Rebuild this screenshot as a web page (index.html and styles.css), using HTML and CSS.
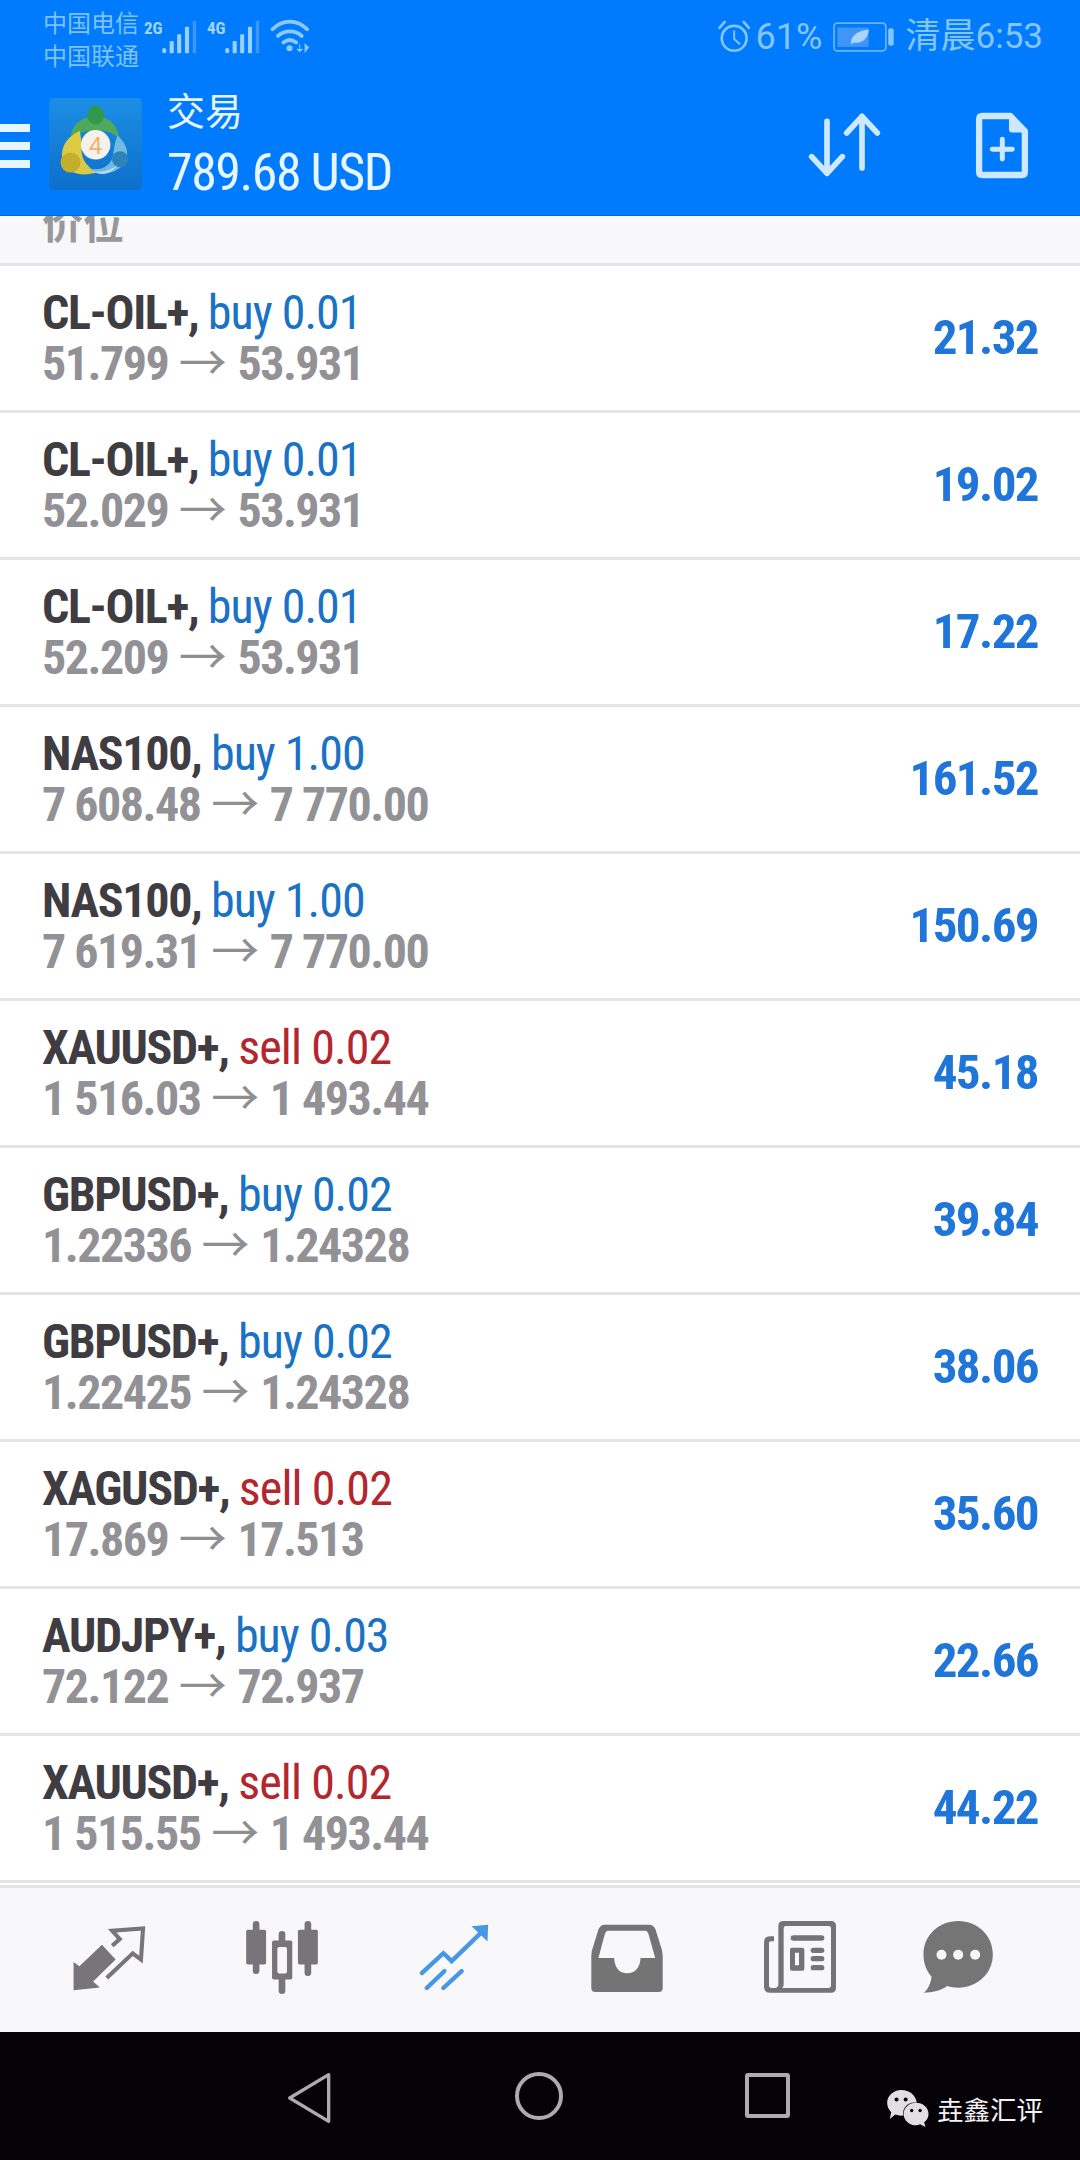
FILE: index.html
```html
<!DOCTYPE html>
<html lang="zh">
<head>
<meta charset="utf-8">
<title>交易</title>
<link rel="stylesheet" href="styles.css">
</head>
<body>
<div class="app">
  <header class="header">
    <div class="status">
      <div class="carriers"><span>中国电信</span><span>中国联通</span></div>
      <div class="signal sig-first">
        <span class="net">2G</span>
        <svg class="bars" viewBox="470 58 102 100"><g class="bar-g"><rect x="470" y="140" width="12" height="16" rx="6"/><rect x="492" y="120" width="12" height="36" rx="3"/><rect x="514" y="100" width="12" height="56" rx="3"/><rect x="537" y="78" width="12" height="78" rx="3"/></g><rect class="bar-dim" x="560" y="60" width="10" height="96" rx="3"/></svg>
      </div>
      <div class="signal sig-second">
        <span class="net">4G</span>
        <svg class="bars" viewBox="470 58 102 100"><g class="bar-g"><rect x="470" y="140" width="12" height="16" rx="6"/><rect x="492" y="120" width="12" height="36" rx="3"/><rect x="514" y="100" width="12" height="56" rx="3"/><rect x="537" y="78" width="12" height="78" rx="3"/></g><rect class="bar-dim" x="560" y="60" width="10" height="96" rx="3"/></svg>
      </div>
      <svg class="wifi" viewBox="790 58 115 100">
        <g fill="none" stroke="#8ccafc" stroke-width="11" stroke-linecap="round">
          <path d="M796 88C826 58 868 58 898 88"/>
          <path d="M812 108C832 90 862 90 882 108"/>
          <path d="M828 127C840 118 854 118 866 127"/>
        </g>
        <circle cx="846" cy="144" r="9" fill="#8ccafc"/>
        <path d="M876 132v22M868 146l8 8 8-8M892 154v-22l10 10z" fill="#8ccafc" stroke="#8ccafc" stroke-width="3"/>
      </svg>
      <div class="status-right">
        <svg class="alarm" viewBox="512 58 100 104">
          <circle cx="561" cy="114" r="38" fill="none" stroke="#84c5fb" stroke-width="8"/>
          <path d="M561 90v26l18 16" fill="none" stroke="#84c5fb" stroke-width="6"/>
          <path d="M516 82l16-18M606 82l-16-18" stroke="#84c5fb" stroke-width="8" stroke-linecap="round"/>
        </svg>
        <span class="pct">61%</span>
        <svg class="battery" viewBox="846 66 180 88">
          <rect x="849" y="69" width="153" height="82" rx="10" fill="none" stroke="#6bb5fb" stroke-width="5"/>
          <rect x="859" y="82" width="92" height="57" fill="#3f96f7"/>
          <path d="M900 132C895 110 915 92 952 88C950 115 930 132 908 126z" fill="#a9d4fb"/>
          <rect x="1009" y="84" width="16" height="52" rx="6" fill="#84c5fb"/>
        </svg>
        <span class="clock">清晨6:53</span>
      </div>
    </div>
    <div class="appbar">
      <div class="burger"><i></i><i></i><i></i></div>
      <svg class="logo" viewBox="58 25 277 275">
        <defs><linearGradient id="lg" x1="0" y1="0" x2="0" y2="1"><stop offset="0" stop-color="#1c8ee6"/><stop offset="1" stop-color="#0d6fca"/></linearGradient></defs>
        <rect x="58" y="25" width="277" height="275" rx="14" fill="url(#lg)"/>
        <path d="M122 140C128 100 158 80 197 80C238 80 262 104 268 146C244 124 222 120 197 124C170 122 146 128 122 140z" fill="#4fa85c"/>
        <ellipse cx="197" cy="76" rx="25" ry="28" fill="#2f9a4c"/>
        <path d="M150 124C110 140 90 176 98 214C108 248 152 262 200 248C166 228 150 200 156 168z" fill="#dcca45"/>
        <circle cx="122" cy="218" r="30" fill="#c5ae2c"/>
        <path d="M262 136C296 166 302 206 272 232C244 256 206 254 172 234C214 246 246 228 250 190C252 170 256 152 262 136z" fill="#6fbadf"/>
        <circle cx="270" cy="208" r="24" fill="#2d83b9"/>
        <path d="M190 244C220 250 248 236 262 226C240 256 210 258 190 244z" fill="#b8dceb"/>
        <circle cx="197" cy="165" r="44" fill="#f6f1ea"/>
        <text class="logo-num" x="197" y="191">4</text>
      </svg>
      <div class="account">
        <div class="acc-title">交易</div>
        <div class="acc-balance">789.68 USD</div>
      </div>
      <svg class="act act-sort" viewBox="780 335 220 195">
        <g fill="none" stroke="#cde8ff" stroke-width="17" stroke-linecap="round" stroke-linejoin="round">
          <path d="M836 360V515M790 466L836 516L882 466"/>
          <path d="M941 345V500M895 395L941 345L987 395"/>
        </g>
      </svg>
      <svg class="act act-doc" viewBox="1260 330 162 202">
        <path d="M1282 342H1366L1410 388V510Q1410 520 1400 520H1282Q1272 520 1272 510V352Q1272 342 1282 342z" fill="none" stroke="#cde8ff" stroke-width="19" stroke-linejoin="round"/>
        <path d="M1362 338L1416 392H1372Q1362 392 1362 382z" fill="#cde8ff"/>
        <path d="M1342 412V472M1312 442H1372" stroke="#cde8ff" stroke-width="15" stroke-linecap="round"/>
      </svg>
    </div>
  </header>

  <div class="section"><span class="section-label">价位</span></div>

  <main class="list">
    <div class="row"><div class="info"><div class="line1"><b>CL-OIL+,</b> <span class="buy">buy 0.01</span></div><div class="line2">51.799 <span class="arr">→</span> 53.931</div></div><div class="val">21.32</div></div>
    <div class="row"><div class="info"><div class="line1"><b>CL-OIL+,</b> <span class="buy">buy 0.01</span></div><div class="line2">52.029 <span class="arr">→</span> 53.931</div></div><div class="val">19.02</div></div>
    <div class="row"><div class="info"><div class="line1"><b>CL-OIL+,</b> <span class="buy">buy 0.01</span></div><div class="line2">52.209 <span class="arr">→</span> 53.931</div></div><div class="val">17.22</div></div>
    <div class="row"><div class="info"><div class="line1"><b>NAS100,</b> <span class="buy">buy 1.00</span></div><div class="line2">7 608.48 <span class="arr">→</span> 7 770.00</div></div><div class="val">161.52</div></div>
    <div class="row"><div class="info"><div class="line1"><b>NAS100,</b> <span class="buy">buy 1.00</span></div><div class="line2">7 619.31 <span class="arr">→</span> 7 770.00</div></div><div class="val">150.69</div></div>
    <div class="row"><div class="info"><div class="line1"><b>XAUUSD+,</b> <span class="sell">sell 0.02</span></div><div class="line2">1 516.03 <span class="arr">→</span> 1 493.44</div></div><div class="val">45.18</div></div>
    <div class="row"><div class="info"><div class="line1"><b>GBPUSD+,</b> <span class="buy">buy 0.02</span></div><div class="line2">1.22336 <span class="arr">→</span> 1.24328</div></div><div class="val">39.84</div></div>
    <div class="row"><div class="info"><div class="line1"><b>GBPUSD+,</b> <span class="buy">buy 0.02</span></div><div class="line2">1.22425 <span class="arr">→</span> 1.24328</div></div><div class="val">38.06</div></div>
    <div class="row"><div class="info"><div class="line1"><b>XAGUSD+,</b> <span class="sell">sell 0.02</span></div><div class="line2">17.869 <span class="arr">→</span> 17.513</div></div><div class="val">35.60</div></div>
    <div class="row"><div class="info"><div class="line1"><b>AUDJPY+,</b> <span class="buy">buy 0.03</span></div><div class="line2">72.122 <span class="arr">→</span> 72.937</div></div><div class="val">22.66</div></div>
    <div class="row"><div class="info"><div class="line1"><b>XAUUSD+,</b> <span class="sell">sell 0.02</span></div><div class="line2">1 515.55 <span class="arr">→</span> 1 493.44</div></div><div class="val">44.22</div></div>
  </main>

  <nav class="tabs">
    <svg class="tab t1" viewBox="215 200 210 190">
      <path d="M215 388V305L232 318L298 255L338 298L272 362L292 380z" fill="#77757a"/>
      <path d="M328 258L350 238L328 214L418 207L412 298L388 280L312 352" fill="none" stroke="#77757a" stroke-width="12"/>
    </svg>
    <svg class="tab t2" viewBox="708 184 218 220">
      <g fill="#77757a">
        <rect x="729" y="184" width="20" height="160" rx="10"/><rect x="709" y="210" width="60" height="105" rx="5"/>
        <rect x="807" y="214" width="20" height="190" rx="10"/><rect x="787" y="243" width="61" height="117" rx="5"/>
        <rect x="885" y="184" width="20" height="166" rx="10"/><rect x="865" y="210" width="60" height="105" rx="5"/>
      </g>
      <rect x="803" y="262" width="29" height="80" rx="6" fill="#f8f7f9"/>
    </svg>
    <svg class="tab t3" viewBox="1212 190 210 202">
      <g fill="none" stroke="#4797e5" stroke-width="13" stroke-linecap="round">
        <path d="M1220 338L1285 278L1310 302L1405 210"/>
        <path d="M1235 383L1288 332M1285 383L1340 332"/>
      </g>
      <path d="M1370 197L1420 192L1418 243z" fill="#4797e5"/>
    </svg>
    <svg class="tab t4" viewBox="147 190 210 200">
      <path fill-rule="evenodd" d="M185 192H318Q330 192 336 206L352 258Q357 270 357 284V378Q357 390 345 390H159Q147 390 147 378V284Q147 270 152 258L168 206Q174 192 185 192zM196 210Q190 210 186 222L168 290H214Q218 335 252 335Q288 335 292 290H335L316 222Q312 210 306 210z" fill="#747474"/>
    </svg>
    <svg class="tab t5" viewBox="646 183 218 216">
      <path fill-rule="evenodd" d="M705 183H848Q863 183 863 198V383Q863 398 848 398H665Q647 398 647 380V248Q647 229 665 229H677V244H667Q662 244 662 249V376Q662 384 670 384H678Q690 384 690 372V198Q690 183 705 183zM713 198Q706 198 706 205V374Q706 382 700 384H840Q848 384 848 376V205Q848 198 840 198z" fill="#747474"/>
      <g fill="#747474">
        <rect x="727" y="226" width="101" height="16" rx="8"/>
        <rect x="787" y="263" width="41" height="16" rx="8"/>
        <rect x="787" y="288" width="41" height="16" rx="8"/>
        <rect x="787" y="315" width="41" height="16" rx="8"/>
      </g>
      <path fill-rule="evenodd" d="M731 263H762Q768 263 768 269V326Q768 332 762 332H731Q725 332 725 326V269Q725 263 731 263zM740 278V316H752V278z" fill="#747474"/>
    </svg>
    <svg class="tab t6" viewBox="1108 183 212 216">
      <path d="M1213 183C1271 183 1317 226 1317 283C1317 340 1271 383 1213 383C1202 383 1190 381 1180 378C1160 392 1135 398 1110 398C1122 388 1130 372 1133 350C1117 332 1109 308 1109 283C1109 226 1155 183 1213 183z" fill="#757575"/>
      <g fill="#f7f7f8"><circle cx="1163" cy="284" r="15"/><circle cx="1213" cy="284" r="15"/><circle cx="1264" cy="284" r="15"/></g>
    </svg>
  </nav>

  <footer class="navbar">
    <svg class="nav-back" viewBox="830 630 132 156"><path d="M838 708L955 638V778z" fill="none" stroke="#aeaaad" stroke-width="10" stroke-linejoin="round"/></svg>
    <div class="nav-home"></div>
    <div class="nav-recent"></div>
    <div class="mark">
      <svg class="mark-icon" viewBox="1008 692 124 110">
        <path d="M1050 692C1074 692 1094 708 1096 730C1072 726 1052 744 1056 768C1048 769 1040 768 1032 765L1016 778L1020 758C1012 750 1008 740 1008 730C1008 709 1027 692 1050 692z" fill="#e2dfe4"/>
        <path d="M1094 730C1114 730 1131 744 1131 763C1131 773 1126 782 1118 788L1122 802L1106 794C1102 796 1098 797 1094 797C1074 797 1057 782 1057 763C1057 744 1074 730 1094 730z" fill="#e2dfe4"/>
        <g fill="#0a060c"><circle cx="1036" cy="720" r="6"/><circle cx="1063" cy="720" r="6"/><circle cx="1081" cy="753" r="5"/><circle cx="1106" cy="753" r="5"/></g>
      </svg>
      <span class="mark-text">垚鑫汇评</span>
    </div>
  </footer>
</div>
</body>
</html>
```

FILE: styles.css
```css
* { box-sizing: border-box; }
html, body { margin: 0; padding: 0; }
body { width: 1080px; height: 2160px; overflow: hidden; background: #fff; font-family: Roboto, "Noto Sans CJK SC", sans-serif; }
.app { display: flex; flex-direction: column; width: 1080px; height: 2160px; }

.header { position: relative; z-index: 2; height: 216px; flex: none; background: #007bfd; border-bottom: 1px solid #0069d4; color: #fff; }
.status { display: flex; align-items: flex-start; height: 85px; padding: 5px 37px 0 43px; color: #84c5fb; }
.carriers { display: flex; flex-direction: column; font-size: 24px; line-height: 33px; width: 101px; font-family: "Noto Sans CJK SC", sans-serif; color: #7fc1f8; }
.signal { display: flex; align-items: flex-start; margin-top: 13px; height: 36px; }
.sig-second { margin-left: 10px; }
.net { font-family: Roboto, sans-serif; font-weight: 700; font-size: 17px; line-height: 20px; width: 18px; color: #a3d4fb; font-stretch: 75%; }
.bars { width: 35px; height: 34px; margin-top: 2px; }
.bar-g { fill: #9ad0fc; }
.bar-dim { fill: #3f96f7; }
.wifi { width: 40px; height: 34px; margin: 14px 0 0 10px; }
.status-right { display: flex; align-items: center; margin-left: auto; height: 34px; margin-top: 15px; }
.alarm { width: 33px; height: 34px; margin-right: 5px; }
.pct { font-size: 36px; line-height: 34px; width: 68px; color: #84c5fb; }
.battery { width: 61px; height: 30px; margin: 0 12px 0 9px; }
.clock { font-size: 35px; line-height: 34px; color: #84c5fb; font-family: Roboto, "Noto Sans CJK SC", sans-serif; }

.appbar { display: flex; align-items: flex-start; height: 130px; }
.burger { display: flex; flex-direction: column; gap: 10px; width: 30px; margin-top: 39px; }
.burger i { display: block; height: 8px; background: #e6f5ff; }
.logo { width: 93px; height: 92px; margin: 13px 0 0 19px; flex: none; }
.logo-num { font-family: "Liberation Sans", sans-serif; font-size: 72px; fill: #efb468; text-anchor: middle; }
.account { margin-left: 25px; width: 643px; flex: none; }
.acc-title { font-family: "Noto Sans CJK SC", sans-serif; font-size: 38px; line-height: 48px; color: #e6f5ff; }
.acc-balance { font-size: 52px; line-height: 60px; margin-top: 10px; color: #e6f5ff; font-stretch: 75%; letter-spacing: -1.5px; }
.act { flex: none; }
.act-sort { width: 76px; height: 65px; margin: 28px 0 0 -3px; }
.act-doc { width: 56px; height: 67px; margin: 27px 0 0 91px; }

.section { height: 50px; flex: none; background: #f8f7f9; border-bottom: 3px solid #e4e4e4; overflow: hidden; padding-left: 42px; }
.section-label { display: block; margin-top: -21px; font-family: "Noto Sans CJK SC", sans-serif; font-weight: 700; font-size: 41px; line-height: 52px; color: #98989b; }

.list { flex: none; }
.row { display: flex; align-items: center; justify-content: space-between; height: 147px; padding: 0 42px 0 42px; border-bottom: 3px solid #e4e4e4; }
.info { font-size: 48px; line-height: 51px; font-stretch: 75%; letter-spacing: -1.5px; }
.line1 { color: #1a72c4; white-space: nowrap; }
.line1 b { font-weight: 700; color: #3f3c42; letter-spacing: -1.35px; }
.buy { color: #1a72c4; letter-spacing: -1px; }
.sell { color: #b3262e; letter-spacing: -.9px; }
.line2 { font-weight: 700; color: #929196; white-space: nowrap; }
.arr { font-family: "Noto Sans CJK SC", sans-serif; font-weight: 400; color: #8f8f93; letter-spacing: 0; line-height: 40px; margin: 0 1px 0 1px; }
.val { font-size: 49px; font-weight: 700; color: #1f75d8; font-stretch: 75%; letter-spacing: -1.6px; padding-bottom: 2px; }

.tabs { display: flex; align-items: flex-start; height: 147px; flex: none; margin-top: 2px; border-top: 3px solid #e4e4e4; background: #f8f7f9; padding-top: 33px; }
.tab { flex: none; }
.t1 { width: 75px; height: 65px; margin: 5px 0 0 72px; }
.t2 { width: 76px; height: 73px; margin-left: 97px; }
.t3 { width: 74px; height: 67px; margin: 3px 0 0 97px; }
.t4 { width: 74px; height: 68px; margin: 3px 0 0 99px; }
.t5 { width: 76px; height: 72px; margin-left: 98px; }
.t6 { width: 73px; height: 72px; margin-left: 84px; }

.navbar { position: relative; display: flex; align-items: flex-start; flex: 1; background: #050207; padding: 40px 0 0 286px; }
.nav-back { width: 46px; height: 52px; }
.nav-home { width: 48px; height: 48px; margin-left: 183px; border: 4px solid #aeaaad; border-radius: 50%; }
.nav-recent { width: 45px; height: 45px; margin: 1px 0 0 182px; border: 4px solid #aeaaad; border-radius: 3px; }
.mark { position: absolute; left: 887px; top: 58px; display: flex; align-items: center; gap: 8px; }
.mark-icon { width: 42px; height: 37px; }
.mark-text { font-family: "Noto Sans CJK SC", sans-serif; font-size: 26.5px; line-height: 37px; color: #f4f2f5; white-space: nowrap; }
```
